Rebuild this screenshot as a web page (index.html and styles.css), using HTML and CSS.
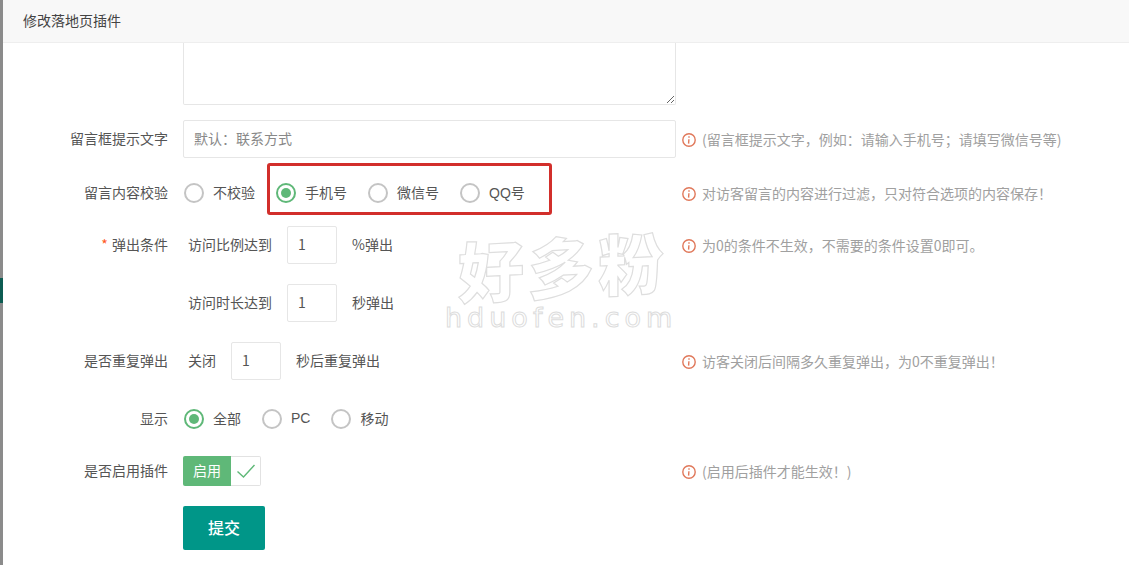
FILE: index.html
```html
<!DOCTYPE html>
<html lang="zh-CN">
<head>
    <meta charset="UTF-8">
    <title>修改落地页插件</title>
    <link rel="stylesheet" href="styles.css">
</head>
<body>
    <div class="backdrop"><span class="backdrop-mark"></span></div>

    <div class="modal">
        <div class="modal-title">修改落地页插件</div>

        <form class="modal-body">
            <div class="textarea-row">
                <textarea class="textarea"></textarea>
            </div>

            <div class="form-row first-row">
                <label class="form-label">留言框提示文字</label>
                <div class="form-field">
                    <input class="text-input" type="text" placeholder="默认：联系方式">
                </div>
                <div class="form-tip">
                    <svg class="tip-icon" viewBox="0 0 14 14"><circle cx="7" cy="7" r="6.2"/><path d="M7 3.2v1.6M6.9 6.2 6.6 10.6"/></svg>
                    (留言框提示文字，例如：请输入手机号；请填写微信号等)
                </div>
            </div>

            <div class="form-row">
                <label class="form-label">留言内容校验</label>
                <div class="form-field radio-group">
                    <span class="radio-item"><i class="radio"></i>不校验</span>
                    <span class="radio-item"><i class="radio checked"></i>手机号</span>
                    <span class="radio-item"><i class="radio"></i>微信号</span>
                    <span class="radio-item"><i class="radio"></i><span><span class="latin">QQ</span>号</span></span>
                    <div class="highlight-box"></div>
                </div>
                <div class="form-tip">
                    <svg class="tip-icon" viewBox="0 0 14 14"><circle cx="7" cy="7" r="6.2"/><path d="M7 3.2v1.6M6.9 6.2 6.6 10.6"/></svg>
                    对访客留言的内容进行过滤，只对符合选项的内容保存！
                </div>
            </div>

            <div class="form-row tight-row">
                <label class="form-label"><span class="required">*</span> 弹出条件</label>
                <div class="form-field inline-field">
                    <span>访问比例达到</span>
                    <input class="num-input" type="text" value="1">
                    <span>%弹出</span>
                </div>
                <div class="form-tip">
                    <svg class="tip-icon" viewBox="0 0 14 14"><circle cx="7" cy="7" r="6.2"/><path d="M7 3.2v1.6M6.9 6.2 6.6 10.6"/></svg>
                    为0的条件不生效，不需要的条件设置0即可。
                </div>
            </div>

            <div class="form-row wide-row">
                <label class="form-label"></label>
                <div class="form-field inline-field">
                    <span>访问时长达到</span>
                    <input class="num-input" type="text" value="1">
                    <span>秒弹出</span>
                </div>
            </div>

            <div class="form-row wide-row">
                <label class="form-label">是否重复弹出</label>
                <div class="form-field inline-field">
                    <span>关闭</span>
                    <input class="num-input" type="text" value="1">
                    <span>秒后重复弹出</span>
                </div>
                <div class="form-tip">
                    <svg class="tip-icon" viewBox="0 0 14 14"><circle cx="7" cy="7" r="6.2"/><path d="M7 3.2v1.6M6.9 6.2 6.6 10.6"/></svg>
                    访客关闭后间隔多久重复弹出，为0不重复弹出！
                </div>
            </div>

            <div class="form-row wide-row">
                <label class="form-label">显示</label>
                <div class="form-field radio-group">
                    <span class="radio-item"><i class="radio checked"></i>全部</span>
                    <span class="radio-item"><i class="radio"></i><span class="latin">PC</span></span>
                    <span class="radio-item"><i class="radio"></i>移动</span>
                </div>
            </div>

            <div class="form-row tight-row">
                <label class="form-label">是否启用插件</label>
                <div class="form-field">
                    <div class="check-switch">
                        <span class="check-text">启用</span>
                        <span class="check-mark">
                            <svg viewBox="0 0 20 16" width="20" height="16"><path d="M1.5 8.5 7.5 14 18.5 2"/></svg>
                        </span>
                    </div>
                </div>
                <div class="form-tip">
                    <svg class="tip-icon" viewBox="0 0 14 14"><circle cx="7" cy="7" r="6.2"/><path d="M7 3.2v1.6M6.9 6.2 6.6 10.6"/></svg>
                    (启用后插件才能生效！)
                </div>
            </div>

            <div class="submit-row">
                <button class="submit-btn" type="button">提交</button>
            </div>
        </form>

        <div class="watermark">
            <div class="watermark-cn">好多粉</div>
            <div class="watermark-en">hduofen.com</div>
        </div>
    </div>
</body>
</html>
```

FILE: styles.css
```css
* {
    margin: 0;
    padding: 0;
    box-sizing: border-box;
}

html, body {
    height: 100%;
    overflow: hidden;
}

body {
    display: flex;
    font-family: "Noto Sans CJK SC", "Liberation Sans", sans-serif;
    font-size: 14px;
    color: #555;
    background: #fff;
}

.backdrop {
    width: 3px;
    flex-shrink: 0;
    background: #8b8b8b;
    padding-top: 278px;
}

.backdrop-mark {
    display: block;
    height: 25px;
    background: #0d5c52;
}

.modal {
    flex: 1;
    position: relative;
    display: flex;
    flex-direction: column;
    min-width: 0;
}

.modal-title {
    height: 43px;
    flex-shrink: 0;
    padding-left: 20px;
    line-height: 41px;
    background: #f8f8f8;
    border-bottom: 1px solid #eee;
    color: #444;
}

.modal-body {
    flex: 1;
    overflow: hidden;
}

.textarea-row {
    padding-left: 180px;
    height: 62px;
}

.textarea {
    display: block;
    width: 493px;
    height: 62px;
    border: 1px solid #e6e6e6;
    border-top: none;
    border-radius: 0 0 2px 2px;
    outline: none;
}

.form-row {
    display: flex;
    align-items: center;
    height: 38px;
    margin-top: 16px;
}

.first-row {
    margin-top: 15px;
}

.tight-row {
    margin-top: 14px;
}

.wide-row {
    margin-top: 20px;
}

.form-label {
    width: 165px;
    flex-shrink: 0;
    padding-bottom: 2px;
    text-align: right;
    color: #555;
}

.required {
    color: #ff5722;
    margin-right: 1px;
}

.form-field {
    width: 493px;
    margin-left: 15px;
    flex-shrink: 0;
    position: relative;
}

.text-input {
    display: block;
    width: 100%;
    height: 38px;
    padding: 0 0 2px 10px;
    border: 1px solid #e6e6e6;
    border-radius: 2px;
    outline: none;
    font: inherit;
}

.text-input::placeholder {
    color: #888;
}

.radio-group {
    display: flex;
    align-items: center;
    gap: 21px;
    padding-left: 1px;
}

.radio-item {
    display: flex;
    align-items: center;
    gap: 9px;
    padding-bottom: 2px;
}

.latin {
    font-family: "Liberation Sans", sans-serif;
}

.radio {
    display: flex;
    align-items: center;
    justify-content: center;
    width: 20px;
    height: 20px;
    margin-top: 2px;
    border: 2px solid #c4c4c4;
    border-radius: 50%;
}

.radio.checked {
    border-color: #5fb878;
}

.radio.checked::before {
    content: "";
    width: 10px;
    height: 10px;
    border-radius: 50%;
    background: #5fb878;
}

.highlight-box {
    position: absolute;
    left: 84px;
    top: calc(50% - 30px);
    width: 285px;
    height: 52px;
    border: 3px solid #d22f2b;
    border-radius: 3px;
}

.inline-field {
    display: flex;
    align-items: center;
    gap: 15px;
    padding-left: 5px;
}

.inline-field span {
    padding-bottom: 2px;
}

.num-input {
    width: 50px;
    height: 38px;
    padding: 0 0 2px 10px;
    border: 1px solid #e6e6e6;
    border-radius: 2px;
    outline: none;
    font: inherit;
    color: #555;
}

.form-tip {
    display: flex;
    align-items: center;
    gap: 6px;
    margin-left: 6px;
    white-space: nowrap;
    color: #a0a0a0;
}

.tip-icon {
    width: 14px;
    height: 14px;
    margin-top: 2px;
    flex-shrink: 0;
    fill: none;
    stroke: #e0785a;
    stroke-width: 1.4;
}

.check-switch {
    display: flex;
    width: 78px;
    height: 30px;
}

.check-text {
    width: 48px;
    line-height: 28px;
    text-align: center;
    color: #fff;
    background: #5fb878;
    border-radius: 2px 0 0 2px;
}

.check-mark {
    display: flex;
    align-items: center;
    justify-content: center;
    width: 30px;
    border: 1px solid #e2e2e2;
    border-left: none;
    border-radius: 0 2px 2px 0;
}

.check-mark svg {
    fill: none;
    stroke: #5fb878;
    stroke-width: 1.4;
}

.submit-row {
    padding-left: 180px;
    margin-top: 16px;
}

.submit-btn {
    display: block;
    width: 82px;
    height: 44px;
    padding-bottom: 2px;
    border: none;
    border-radius: 2px;
    background: #009688;
    color: #fff;
    font: inherit;
    font-size: 16px;
    font-weight: 500;
}

.watermark {
    position: absolute;
    left: 447px;
    top: 224px;
    width: 226px;
    text-align: center;
    color: #fff;
    pointer-events: none;
}

.watermark-cn {
    font-size: 66px;
    font-weight: 900;
    line-height: 80px;
    letter-spacing: 4px;
    transform: skewY(-3deg);
    -webkit-text-stroke: 1.2px #dedede;
}

.watermark-en {
    margin-left: -5px;
    font-family: "DejaVu Sans", sans-serif;
    font-size: 27px;
    line-height: 28px;
    letter-spacing: 5px;
    white-space: nowrap;
    -webkit-text-stroke: 1px #dcdcdc;
}
```
